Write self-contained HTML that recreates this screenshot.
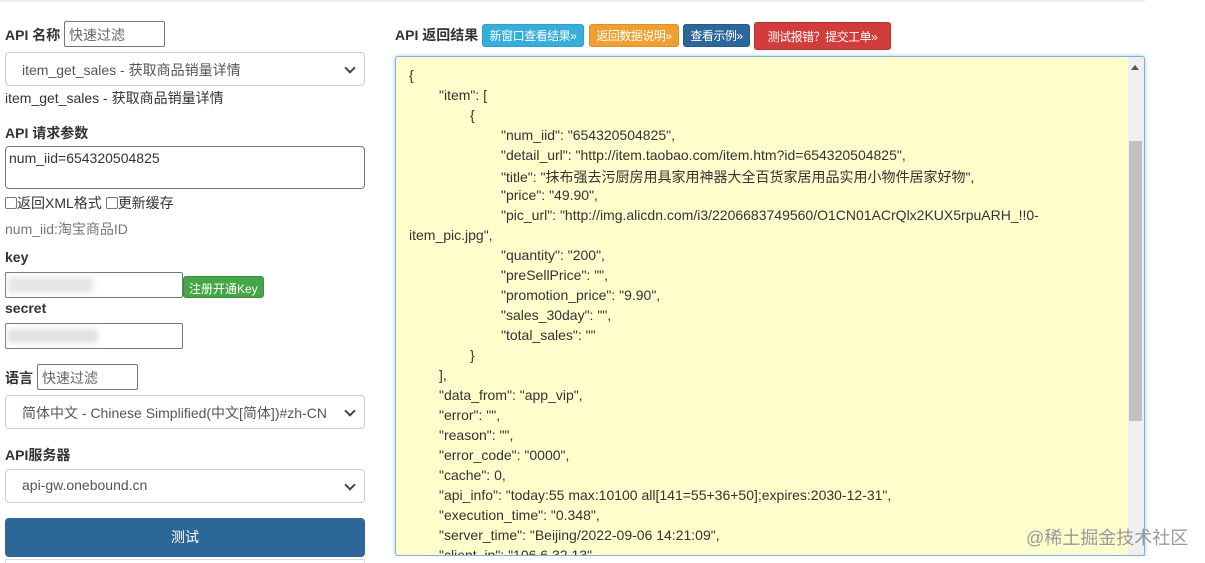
<!DOCTYPE html>
<html><head><meta charset="utf-8"><style>
*{box-sizing:border-box;margin:0;padding:0}
body{width:1205px;height:563px;overflow:hidden;background:#fff;font-family:"Liberation Sans","Noto Sans CJK SC",sans-serif;font-size:14px;color:#333;position:relative}
.a{position:absolute}
.b{font-weight:bold;font-size:14px;color:#333}
.inp{position:absolute;border:1px solid #767676;border-radius:2px;background:#fff;font-size:14px;color:#666;padding:3px 4px;height:27px}
.sel{position:absolute;left:5px;width:360px;height:34px;border:1px solid #ccc;border-radius:4px;background:#fff;padding:7px 16px;font-size:14px;color:#555}
.sel:after{content:"";position:absolute;right:10px;top:11px;width:6px;height:6px;border-right:2px solid #444;border-bottom:2px solid #444;transform:rotate(45deg)}
.btn{position:absolute;top:24px;height:23px;border-radius:3px;color:#fff;font-size:12px;padding:3px 0;line-height:16px;white-space:nowrap;overflow:hidden;text-align:center;letter-spacing:-0.5px}
.l{position:absolute;white-space:nowrap;font-size:14px;color:#333}
</style></head><body>
<div class="a" style="left:0;top:0;width:1145px;height:2px;background:#eee"></div>
<div class="a b" style="left:5px;top:25px">API 名称</div>
<div class="inp" style="left:64px;top:21px;width:101px;height:26px">快速过滤</div>
<div class="sel" style="top:52px">item_get_sales - 获取商品销量详情</div>
<div class="a" style="left:5px;top:88px;font-size:14px;color:#333">item_get_sales - 获取商品销量详情</div>
<div class="a b" style="left:5px;top:123px">API 请求参数</div>
<div class="a" style="left:5px;top:146px;width:360px;height:43px;border:1px solid #767676;border-radius:4px;padding:3px 3px;color:#333">num_iid=654320504825</div>
<div class="a" style="left:5px;top:193px;color:#333"><span style="display:inline-block;width:12px;height:12px;border:1px solid #777;border-radius:2px;vertical-align:-1px"></span>返回XML格式 <span style="display:inline-block;width:12px;height:12px;border:1px solid #777;border-radius:2px;vertical-align:-1px"></span>更新缓存</div>
<div class="a" style="left:5px;top:219px;color:#777">num_iid:淘宝商品ID</div>
<div class="a b" style="left:5px;top:249px">key</div>
<div class="inp" style="left:5px;top:272px;width:178px;height:26px"></div>
<div class="a" style="left:8px;top:277px;width:85px;height:16px;background:#e6e6e6;filter:blur(3px)"></div>
<div class="a" style="left:183px;top:276px;width:81px;height:22px;background:#46a546;border:1px solid #3a8f3a;border-radius:3px;color:#fff;font-size:12px;padding:3px 5px;white-space:nowrap">注册开通Key</div>
<div class="a b" style="left:5px;top:300px">secret</div>
<div class="inp" style="left:5px;top:323px;width:178px;height:26px"></div>
<div class="a" style="left:8px;top:329px;width:90px;height:14px;background:#e0e0e0;filter:blur(3px)"></div>
<div class="a b" style="left:5px;top:368px">语言</div>
<div class="inp" style="left:37px;top:364px;width:101px;height:26px">快速过滤</div>
<div class="sel" style="top:395px">简体中文 - Chinese Simplified(中文[简体])#zh-CN</div>
<div class="a b" style="left:5px;top:445px">API服务器</div>
<div class="sel" style="top:469px">api-gw.onebound.cn</div>
<div class="a" style="left:5px;top:518px;width:360px;height:39px;background:#2d6698;border-radius:4px;color:#fff;text-align:center;line-height:39px;font-size:14px">测试</div>
<div class="a" style="left:5px;top:559px;width:360px;height:4px;border:1px solid #ddd;border-bottom:0"></div>
<div class="a b" style="left:395px;top:25px">API 返回结果</div>
<div class="btn" style="left:482px;width:102px;background:#36aedb;border:1px solid #2ea0cc">新窗口查看结果»</div>
<div class="btn" style="left:589px;width:90px;background:#f0a030;border:1px solid #e0902a">返回数据说明»</div>
<div class="btn" style="left:683px;width:67px;background:#2d6698;border:1px solid #235a88">查看示例»</div>
<div class="btn" style="left:754px;top:22px;height:28px;width:137px;background:#d23c3c;border:1px solid #b83030;padding:6px 0">测试报错？提交工单»</div>
<div class="a" style="left:395px;top:56px;width:750px;height:500px;background:#fffdcc;border:1px solid #7ab3e0;border-radius:3px;box-shadow:0 0 4px #9cc7ee;overflow:hidden">
<div class="a" style="right:0;top:0;width:16px;height:498px;background:#efefef"></div>
<div class="a" style="right:2px;top:84px;width:13px;height:280px;background:#c1c1c1"></div>
<div class="a" style="right:5px;top:8px;border:4px solid transparent;border-bottom:5px solid #555;border-top:0"></div>
</div>
<div class="l" style="left:409px;top:67px">{</div>
<div class="l" style="left:439px;top:87px">"item": [</div>
<div class="l" style="left:470px;top:107px">{</div>
<div class="l" style="left:501px;top:127px">"num_iid": "654320504825",</div>
<div class="l" style="left:501px;top:147px">"detail_url": "http://item.taobao.com/item.htm?id=654320504825",</div>
<div class="l" style="left:501px;top:167px">"title": "抹布强去污厨房用具家用神器大全百货家居用品实用小物件居家好物",</div>
<div class="l" style="left:501px;top:187px">"price": "49.90",</div>
<div class="l" style="left:501px;top:207px">"pic_url": "http://img.alicdn.com/i3/2206683749560/O1CN01ACrQlx2KUX5rpuARH_!!0-</div>
<div class="l" style="left:409px;top:227px">item_pic.jpg",</div>
<div class="l" style="left:501px;top:247px">"quantity": "200",</div>
<div class="l" style="left:501px;top:267px">"preSellPrice": "",</div>
<div class="l" style="left:501px;top:287px">"promotion_price": "9.90",</div>
<div class="l" style="left:501px;top:307px">"sales_30day": "",</div>
<div class="l" style="left:501px;top:327px">"total_sales": ""</div>
<div class="l" style="left:470px;top:347px">}</div>
<div class="l" style="left:439px;top:367px">],</div>
<div class="l" style="left:439px;top:387px">"data_from": "app_vip",</div>
<div class="l" style="left:439px;top:407px">"error": "",</div>
<div class="l" style="left:439px;top:427px">"reason": "",</div>
<div class="l" style="left:439px;top:447px">"error_code": "0000",</div>
<div class="l" style="left:439px;top:467px">"cache": 0,</div>
<div class="l" style="left:439px;top:487px">"api_info": "today:55 max:10100 all[141=55+36+50];expires:2030-12-31",</div>
<div class="l" style="left:439px;top:507px">"execution_time": "0.348",</div>
<div class="l" style="left:439px;top:527px">"server_time": "Beijing/2022-09-06 14:21:09",</div>
<div class="l" style="left:439px;top:547px">"client_ip": "106.6.32.13"</div>
<div class="a" style="left:396px;top:555px;width:749px;height:1px;background:#7ab3e0"></div>
<div class="a" style="left:396px;top:556px;width:749px;height:7px;background:#fff"></div>
<div class="a" style="left:1026px;top:524px;font-size:18px;color:#999;white-space:nowrap">@稀土掘金技术社区</div>
</body></html>
